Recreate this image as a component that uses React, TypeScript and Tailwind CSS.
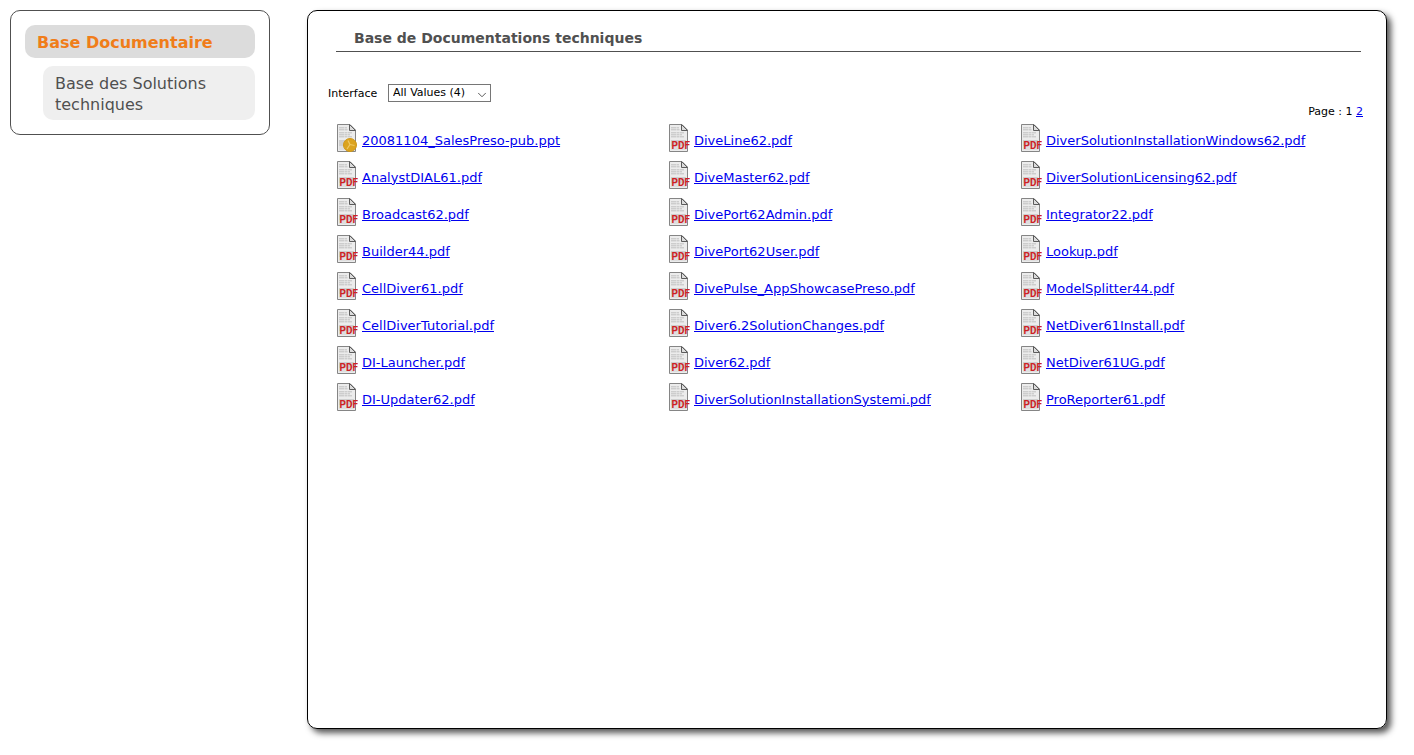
import { ChevronDown } from "lucide-react";

const columns = [
    [
        "20081104_SalesPreso-pub.ppt",
        "AnalystDIAL61.pdf",
        "Broadcast62.pdf",
        "Builder44.pdf",
        "CellDiver61.pdf",
        "CellDiverTutorial.pdf",
        "DI-Launcher.pdf",
        "DI-Updater62.pdf",
    ],
    [
        "DiveLine62.pdf",
        "DiveMaster62.pdf",
        "DivePort62Admin.pdf",
        "DivePort62User.pdf",
        "DivePulse_AppShowcasePreso.pdf",
        "Diver6.2SolutionChanges.pdf",
        "Diver62.pdf",
        "DiverSolutionInstallationSystemi.pdf",
    ],
    [
        "DiverSolutionInstallationWindows62.pdf",
        "DiverSolutionLicensing62.pdf",
        "Integrator22.pdf",
        "Lookup.pdf",
        "ModelSplitter44.pdf",
        "NetDiver61Install.pdf",
        "NetDiver61UG.pdf",
        "ProReporter61.pdf",
    ],
];

function FileIcon({ name }: { name: string }) {
    const isPdf = name.endsWith(".pdf");

    return (
        <svg width="22" height="30" viewBox="0 0 22 30" className="shrink-0" aria-hidden="true">
            <path d="M1.5 1.5H14L19.5 7V28.5H1.5Z" fill="#ececec" stroke="#858585" />
            <path d="M3 17H18V23H3Z" fill="#cecece" />
            <path d="M3 23H18V27H3Z" fill="#dedede" />
            <path d="M13.5 1.5V7.5H19.5Z" fill="#dcdcdc" stroke="#5c5c5c" />
            <path d="M3 4.8H11M3 6.8H12M3 9.8H16M3 11.8H14M3 13.8H16" stroke="#c0c0c0" strokeDasharray="5 0.5 3 0.5" />
            {isPdf ? (
                <text
                    x="3.5"
                    y="26"
                    fontFamily="Roboto, sans-serif"
                    fontSize="10"
                    fontWeight="700"
                    fill="#cf1f25"
                >
                    PDF
                </text>
            ) : (
                <>
                    <circle cx="14" cy="22" r="6.5" fill="#dba31e" stroke="#cf9718" />
                    <path
                        d="M14 21.5L12 17.5M14 21.5L18.5 22.5M14 21.5L11 26"
                        stroke="#f0c964"
                        strokeWidth="1.2"
                        fill="none"
                    />
                </>
            )}
        </svg>
    );
}

function Sidebar() {
    return (
        <nav className="flex w-[260px] shrink-0 flex-col gap-2 self-start rounded-[10px] border border-[#505050] p-3.5 text-base leading-[21px]">
            <a href="#base" className="rounded-[10px] bg-[#dcdcdc] px-3 pt-[7px] pb-[5px] font-bold text-[#f07d19]">
                Base Documentaire
            </a>
            <a
                href="#solutions"
                className="ml-[18px] rounded-[10px] bg-[#efefef] px-3 pt-[7px] pb-[5px] text-[#505050]"
            >
                Base des Solutions techniques
            </a>
        </nav>
    );
}

export default function App() {
    return (
        <div className="flex min-h-screen gap-[37px] bg-white pt-2.5 pr-[27px] pb-[26px] pl-2.5 font-[Verdana,'DejaVu_Sans',sans-serif] text-black">
            <Sidebar />
            <main className="min-w-0 flex-1 rounded-[10px] border border-black px-5 pt-[17px] shadow-[4px_4px_6px_#555555]">
                <h1 className="mr-[5px] ml-2 border-b border-[#505050] px-[18px] pb-0.5 text-[14px] leading-[21px] font-bold text-[#505050]">
                    Base de Documentations techniques
                </h1>
                <div className="mt-8 flex items-center gap-2 text-[11px]">
                    <label htmlFor="interface" className="w-[52px] pt-0.5">
                        Interface
                    </label>
                    <div className="relative">
                        <select
                            id="interface"
                            className="block h-[18px] w-[103px] appearance-none border border-[#767676] bg-white pl-1 leading-4"
                        >
                            <option>All Values (4)</option>
                        </select>
                        <ChevronDown
                            className="pointer-events-none absolute top-1 right-0.5 size-3.5 text-[#444444]"
                            strokeWidth={1.5}
                            aria-hidden="true"
                        />
                    </div>
                </div>
                <div className="mr-[3px] text-right text-[11px] leading-[18px]">
                    Page : 1{" "}
                    <a href="#page-2" className="text-[#0000ee] underline">
                        2
                    </a>
                </div>
                <div className="mt-0.5 mr-[5px] ml-2 grid grid-cols-[332fr_352fr_341fr] text-[13px]">
                    {columns.map((files) => (
                        <ul key={files[0]}>
                            {files.map((name) => (
                                <li key={name} className="flex h-[37px] items-start gap-1">
                                    <FileIcon name={name} />
                                    <a href={`#${name}`} className="mt-[9px] leading-[18px] text-[#0000ee] underline">
                                        {name}
                                    </a>
                                </li>
                            ))}
                        </ul>
                    ))}
                </div>
            </main>
        </div>
    );
}
